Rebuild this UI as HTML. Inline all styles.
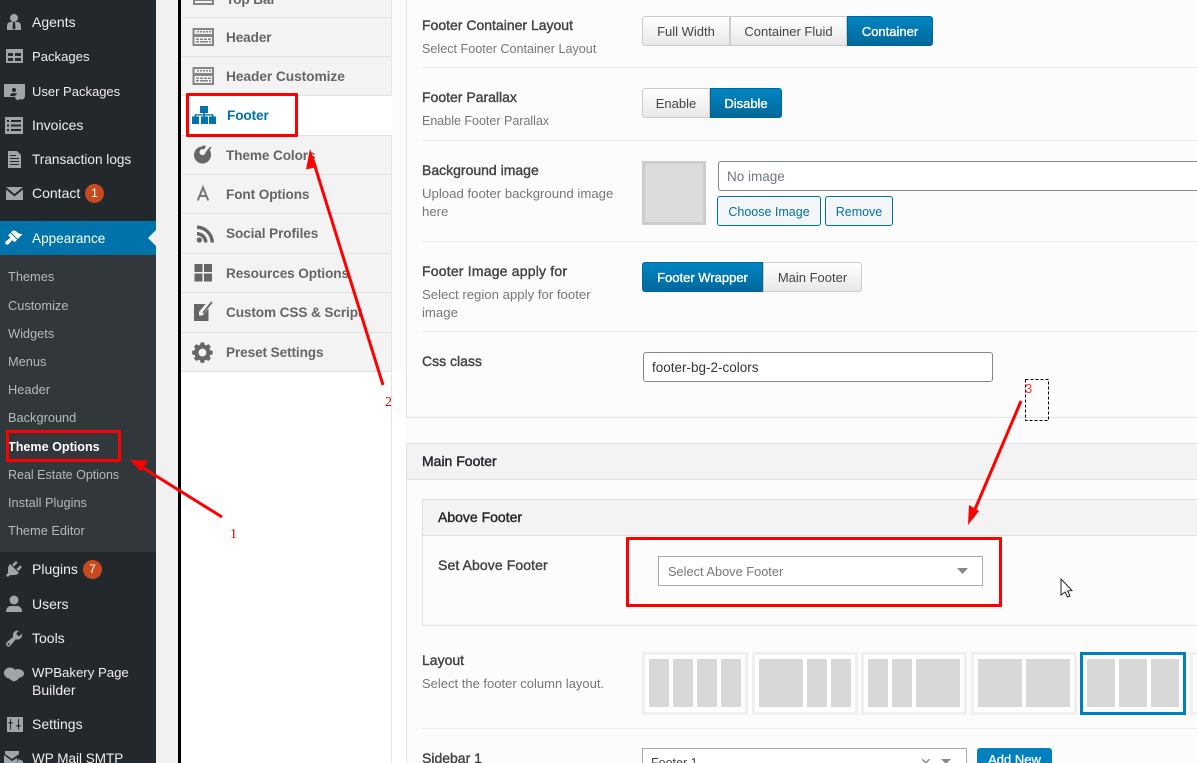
<!DOCTYPE html>
<html><head><meta charset="utf-8"><style>
html,body{margin:0;padding:0;width:1197px;height:763px;overflow:hidden;background:#fcfcfc}
body{position:relative;font-family:"Liberation Sans",sans-serif;font-size:13px;color:#444}
div,span.a,svg{position:absolute}
.t{white-space:nowrap;line-height:20px;height:20px}
.m{left:32px;font-size:14px;color:#eee}
.s{left:8px;font-size:12.8px;color:#b4b9be}
.tab{left:226px;font-size:13.6px;font-weight:bold;color:#666;letter-spacing:-.1px}
.l{left:422px;font-size:14px;color:#444;-webkit-text-stroke:.4px #444}
.d{left:422px;font-size:12.6px;color:#777}
.hr{height:1px;background:#eee;left:422px;width:775px}
.b{height:1px;background:#e2e2e2}
.btn{box-sizing:border-box;height:30px;text-align:center;line-height:30px;font-size:13px;color:#444;background:linear-gradient(#fff,#e8e8e8);border:1px solid #ccc}
.on{background:linear-gradient(#0085c3,#00689b);border:1px solid #006799;color:#fff;-webkit-text-stroke:.35px #fff;line-height:30px}
.inp{box-sizing:border-box;background:#fff;border:1px solid #7e8993;border-radius:3px;height:30px;line-height:30px;font-size:13.5px;padding-left:8px}
.ob{box-sizing:border-box;height:30px;background:#f3f5f6;border:1px solid #0071a1;border-radius:3px;color:#0071a1;text-align:center;line-height:30px;font-size:12.5px}
.th{box-sizing:border-box;top:652px;height:63px;width:106px;border:3px solid #f0f0f0;background:#fff}
.g{top:659px;height:48px;background:#d8d8d8}
.red{box-sizing:border-box;border:3.500px solid #f00;border-radius:1px}
.bd{left:85px;width:19px;height:19px;border-radius:50%;background:#ca4a1f;color:#fff;font-size:12px;line-height:19px;text-align:center}
.h{font-size:14px;color:#23282d;-webkit-text-stroke:.4px #23282d}
</style></head><body>

<!-- Admin sidebar -->
<div style="left:0;top:0;width:156px;height:763px;background:#23282d"></div>
<div style="left:0;top:255px;width:156px;height:297px;background:#32373c"></div>
<div style="left:0;top:221px;width:156px;height:34px;background:#0073aa"></div>
<svg style="left:148px;top:230px" width="8" height="16"><path d="M8 0L0 8l8 8z" fill="#f1f1f1"/></svg>
<div style="left:156px;top:0;width:22px;height:763px;background:#f1f1f1"></div>
<div style="left:178px;top:0;width:3px;height:763px;background:#000"></div>

<div class="t m" style="top:12px">Agents</div>
<div class="t m" style="top:47px;font-size:13.1px">Packages</div>
<div class="t m" style="top:82px;font-size:13px">User Packages</div>
<div class="t m" style="top:115px">Invoices</div>
<div class="t m" style="top:150px;font-size:13.6px">Transaction logs</div>
<div class="t m" style="top:183px">Contact</div>
<div class="bd" style="top:184px">1</div>
<div class="t m" style="top:229px;color:#fff;font-size:13.6px">Appearance</div>
<div class="t s" style="top:267px">Themes</div>
<div class="t s" style="top:296px">Customize</div>
<div class="t s" style="top:324px">Widgets</div>
<div class="t s" style="top:352px">Menus</div>
<div class="t s" style="top:380px">Header</div>
<div class="t s" style="top:408px">Background</div>
<div class="t s" style="top:437px;color:#fff;font-weight:bold;font-size:12.6px">Theme Options</div>
<div class="t s" style="top:465px;font-size:12.5px">Real Estate Options</div>
<div class="t s" style="top:493px">Install Plugins</div>
<div class="t s" style="top:521px">Theme Editor</div>
<div class="t m" style="top:559px">Plugins</div>
<div class="bd" style="top:560px;left:83px">7</div>
<div class="t m" style="top:594px">Users</div>
<div class="t m" style="top:628px">Tools</div>
<div class="t m" style="top:663px;font-size:13.2px">WPBakery Page</div>
<div class="t m" style="top:680px">Builder</div>
<div class="t m" style="top:714px">Settings</div>
<div class="t m" style="top:749px;font-size:13.5px">WP Mail SMTP</div>

<!-- Sidebar icons -->
<svg style="left:0;top:0" width="32" height="763" fill="#a0a5aa">
<circle cx="14" cy="18" r="4"/><path d="M7 30v-4q0-3 3-4h8q3 1 3 4v4z"/><path d="M13 22h2l.6 6-1.6 2-1.6-2z" fill="#23282d"/>
<path fill-rule="evenodd" d="M6 49h17v14H6zM8 53v3h5v-3zM15 53v3h6v-3zM8 58v3h5v-3zM15 58v3h6v-3z"/>
<path d="M4 84h21v13h-7a4 4 0 0 0-4 0H4z"/><circle cx="14" cy="90" r="2" fill="#23282d"/><path d="M10 96q0-3 4-3t4 3z" fill="#23282d"/><circle cx="18" cy="97" r="3"/><circle cx="22" cy="97" r="2.500"/>
<path fill-rule="evenodd" d="M5 117h18v17H5zM7 120v2h2v-2zM11 120v2h10v-2zM7 124.500v2h2v-2zM11 124.500v2h10v-2zM7 129v2h2v-2zM11 129v2h10v-2z"/>
<path fill-rule="evenodd" d="M8 151h9l4 4v13H8zM10 155v1h6v-1zM10 158v1h9v-1zM10 161v1h9v-1zM10 164v1h9v-1z"/>
<path d="M6 187h17l-8.500 7zM6 189.500v10.500h17v-10.500l-8.500 7z"/>
<path transform="translate(4,228.500) scale(.95)" fill="#fff" d="M14.480 11.060L7.410 3.990l1.500-1.500c.5-.56 2.300-.47 3.510.32 1.210.8 1.430 1.280 2.910 2.100 1.180.64 2.450 1.260 4.450.85zm-.71.71L6.700 4.700 4.930 6.470c-.39.39-.39 1.020 0 1.410l1.060 1.060c.39.39.39 1.030 0 1.420-.6.6-1.430 1.110-2.210 1.690-.35.26-.7.53-1.010.84C1.430 13.230 1 14.700 1.800 16.200c1 1.200 2.500 1 3.600-.2.300-.3.600-.7.840-1 .58-.78 1.090-1.600 1.700-2.200.4-.4 1-.4 1.400 0l1.060 1.060c.39.39 1.020.39 1.410 0z"/>
<path transform="translate(4,559)" d="M13.110 4.360L9.870 7.600 8 5.730l3.240-3.240c.35-.34 1.050-.2 1.560.32.520.51.660 1.210.31 1.550zm-8 1.770l.91-1.120 9.010 9.010-1.190.84c-.71.71-2.630 1.160-3.820 1.160H6.140L4.900 17.260c-.59.59-1.540.59-2.120 0-.59-.58-.59-1.530 0-2.120l1.240-1.240v-3.880c0-1.130.4-3.190 1.090-3.890zm7.260 3.970l3.240-3.240c.34-.35 1.040-.21 1.550.31.520.51.660 1.210.31 1.550l-3.240 3.250z"/>
<circle cx="14" cy="600" r="4.500"/><path d="M6 612q0-5 4-6h8q4 1 4 6z"/>
<path transform="translate(4,628.500)" fill-rule="evenodd" d="M16.680 9.770c-1.340 1.340-3.300 1.670-4.950.99l-5.410 6.520c-.99.99-2.590.99-3.580 0s-.99-2.590 0-3.570l6.520-5.420c-.68-1.650-.35-3.610.99-4.950 1.280-1.280 3.120-1.620 4.720-1.060l-2.890 2.890 2.820 2.820 2.860-2.870c.53 1.580.18 3.390-1.080 4.670zM3.810 16.210c.4.39 1.040.39 1.430 0 .4-.4.4-1.040 0-1.430-.39-.4-1.030-.4-1.430 0-.39.39-.39 1.030 0 1.430z"/>
<ellipse cx="10" cy="673" rx="6" ry="5.500"/><ellipse cx="18" cy="673.500" rx="6" ry="4.500"/><ellipse cx="14" cy="677" rx="5" ry="4"/><path d="M12 679l4 0-2 3z"/>
<path fill-rule="evenodd" d="M7 717h16v15H7zM10 719v3h-1.500v1.500H10v6h1v-6h1.500V722H11v-3zM18 719v6h-1.500v1.500H18v3h1v-3h1.500V725H19v-6z"/>
<path d="M5 751h14v3l-7 5-7-5zM4 755l8 6 5-3v5H4zM18 759l5 2v2h-6z"/>
</svg>

<!-- Tabs column -->
<div style="left:181px;top:0;width:210px;height:371px;background:#f3f3f3"></div>
<div style="left:181px;top:371px;width:225px;height:392px;background:#fff"></div>
<div style="left:391px;top:0;width:1px;height:763px;background:#e5e5e5"></div>
<div style="left:181px;top:96px;width:211px;height:39px;background:#fff"></div>
<div class="b" style="left:181px;top:17px;width:210px"></div>
<div class="b" style="left:181px;top:56px;width:210px"></div>
<div class="b" style="left:181px;top:95px;width:210px"></div>
<div class="b" style="left:181px;top:135px;width:210px"></div>
<div class="b" style="left:181px;top:174px;width:210px"></div>
<div class="b" style="left:181px;top:213px;width:210px"></div>
<div class="b" style="left:181px;top:253px;width:210px"></div>
<div class="b" style="left:181px;top:292px;width:210px"></div>
<div class="b" style="left:181px;top:332px;width:210px"></div>
<div class="b" style="left:181px;top:371px;width:210px"></div>

<div class="t tab" style="top:-10px">Top Bar</div>
<div class="t tab" style="top:28px">Header</div>
<div class="t tab" style="top:67px;font-size:13.800px">Header Customize</div>
<div class="t tab" style="top:106px;left:227px;color:#0073aa">Footer</div>
<div class="t tab" style="top:146px">Theme Colors</div>
<div class="t tab" style="top:185px">Font Options</div>
<div class="t tab" style="top:224px">Social Profiles</div>
<div class="t tab" style="top:264px">Resources Options</div>
<div class="t tab" style="top:303px">Custom CSS &amp; Script</div>
<div class="t tab" style="top:343px">Preset Settings</div>

<!-- Tab icons -->
<svg style="left:185px;top:0;overflow:visible" width="36" height="370" fill="#858585">
<path fill-rule="evenodd" d="M8-6h21V5H8zM10-3v1h17v-1zM10 1v2h17V1z"/>
<path fill-rule="evenodd" d="M7.500 28h21.500v18H7.500zM9.500 30v4h17.500v-4zM9.500 37v7h17.500v-7z"/><path d="M12 31h2v1.500h-2zM15 31h2v1.500h-2zM18 31h2v1.500h-2zM21 31h2v1.500h-2zM24 31h2v1.500h-2zM11 38.500h3v1.500h-3zM15 38.500h3v1.500h-3zM19 38.500h3v1.500h-3zM23 38.500h3v1.500h-3zM11 41h3v1.500h-3zM15 41h8v1.500h-8zM24 41h2v1.500h-2z"/>
<path fill-rule="evenodd" d="M7.500 67h21.500v18H7.500zM9.500 69v4h17.500v-4zM9.500 76v7h17.500v-7z"/><path d="M12 70h2v1.500h-2zM15 70h2v1.500h-2zM18 70h2v1.500h-2zM21 70h2v1.500h-2zM24 70h2v1.500h-2zM11 77.500h3v1.500h-3zM15 77.500h3v1.500h-3zM19 77.500h3v1.500h-3zM23 77.500h3v1.500h-3zM11 80h3v1.500h-3zM15 80h8v1.500h-8zM24 80h2v1.500h-2z"/>
<g fill="#0073aa"><path d="M15 106h8v7h-8zM7 116.500h7v7.500H7zM16 116.500h7v7.500h-7zM24 116.500h7v7.500h-7z"/><path d="M18.200 113h1.600v1.200H28.500v2.300h-1.600v-1H19.800v1h-1.600v-1H11.100v1H9.500v-2.300h8.700z"/></g>
<path fill="#666" fill-rule="evenodd" d="M17.500 146.500a8.500 8.500 0 1 0 8.500 8.500c0-2.500-.7-4.500-2-6l-3.500 3a3 3 0 1 1-1.500-2.500l2-3.500c-1-.3-2.300-.5-3.500-.5z"/>
<path fill="#666" d="M25.500 146.500l1 1-3 4-1.500-1.500z"/>
<path fill="none" stroke="#777" stroke-width="2" d="M12.800 200.500L18 187.500l5.200 13M14.600 196h6.800"/>
<path fill="#666" d="M12 225.500c9 0 17 8 17 17h-3.500c0-7.500-6-13.500-13.500-13.500zM12 232c5.800 0 10.500 4.700 10.500 10.500H19c0-3.900-3.100-7-7-7z"/><circle cx="14.300" cy="240" r="2.600" fill="#666"/>
<path fill="#666" d="M9.500 264h8v8h-8zM19 264h8v8h-8zM9.500 273.500h8v8h-8zM19 273.500h8v8h-8z"/>
<path fill="#666" d="M9 304h11.500l-6.500 8v3.500h3.500l6-7V321H9z"/><path fill="none" stroke="#666" stroke-width="1.800" d="M18 313l9-11"/>
<path transform="translate(17.400,352.600) scale(.87) translate(-18.500,-353.800)" fill="#666" fill-rule="evenodd" d="M16.500 342h4l.6 2.800 1.800.8 2.500-1.500 2.800 2.800-1.500 2.500.8 1.800 2.800.6v4l-2.800.6-.8 1.800 1.500 2.500-2.800 2.800-2.500-1.500-1.800.8-.6 2.800h-4l-.6-2.800-1.800-.8-2.500 1.500-2.800-2.800 1.500-2.500-.8-1.800-2.800-.6v-4l2.800-.6.8-1.800-1.500-2.500 2.800-2.800 2.500 1.500 1.800-.8zM18.500 349.300a4.500 4.500 0 1 0 .1 0z"/>
</svg>

<!-- Main panel lines -->
<div style="left:406px;top:0;width:1px;height:418px;background:#e2e2e2"></div>
<div class="b" style="left:406px;top:417px;width:791px"></div>
<div class="hr" style="top:67px"></div>
<div class="hr" style="top:140px"></div>
<div class="hr" style="top:241px"></div>
<div class="hr" style="top:331px"></div>

<div class="t l" style="top:15px">Footer Container Layout</div>
<div class="t d" style="top:39px">Select Footer Container Layout</div>
<div class="btn" style="left:642px;top:16px;width:88px;border-radius:3px 0 0 3px">Full Width</div>
<div class="btn" style="left:730px;top:16px;width:117px">Container Fluid</div>
<div class="btn on" style="left:847px;top:16px;width:86px;border-radius:0 3px 3px 0">Container</div>

<div class="t l" style="top:87px">Footer Parallax</div>
<div class="t d" style="top:111px;font-size:12.5px">Enable Footer Parallax</div>
<div class="btn" style="left:642px;top:88px;width:68px;border-radius:3px 0 0 3px">Enable</div>
<div class="btn on" style="left:710px;top:88px;width:72px;border-radius:0 3px 3px 0">Disable</div>

<div class="t l" style="top:160px">Background image</div>
<div class="t d" style="top:184px;font-size:13.2px">Upload footer background image</div>
<div class="t d" style="top:202px;font-size:13.2px">here</div>
<div style="left:642px;top:161px;width:64px;height:64px;box-sizing:border-box;background:#dcdcdc;border:3px solid #ccc"></div>
<div class="inp" style="left:718px;top:161px;width:490px;color:#72777c">No image</div>
<div class="ob" style="left:717px;top:196px;width:104px">Choose Image</div>
<div class="ob" style="left:825px;top:196px;width:68px">Remove</div>

<div class="t l" style="top:261px;letter-spacing:.2px">Footer Image apply for</div>
<div class="t d" style="top:285px;font-size:13.2px">Select region apply for footer</div>
<div class="t d" style="top:303px;font-size:13.2px">image</div>
<div class="btn on" style="left:642px;top:262px;width:121px;border-radius:3px 0 0 3px">Footer Wrapper</div>
<div class="btn" style="left:763px;top:262px;width:99px;border-radius:0 3px 3px 0">Main Footer</div>

<div class="t l" style="top:351px">Css class</div>
<div class="inp" style="left:643px;top:352px;width:350px;color:#32373c">footer-bg-2-colors</div>

<!-- Main Footer -->
<div style="left:406px;top:443px;width:791px;height:35px;background:#f3f3f3;border:1px solid #e2e2e2;border-right:0"></div>
<div class="t h" style="left:422px;top:451px">Main Footer</div>
<div style="left:406px;top:480px;width:1px;height:283px;background:#e5e5e5"></div>

<div style="left:422px;top:499px;width:775px;height:35px;background:#f3f3f3;border:1px solid #e0e0e0;border-right:0"></div>
<div style="left:422px;top:536px;width:1px;height:90px;background:#e2e2e2"></div>
<div class="b" style="left:422px;top:625px;width:775px"></div>
<div class="t h" style="left:438px;top:507px">Above Footer</div>
<div class="t l" style="left:438px;top:555px;letter-spacing:.1px">Set Above Footer</div>
<div style="left:658px;top:556px;width:325px;height:30px;box-sizing:border-box;background:#fff;border:1px solid #aaa"></div>
<div class="t" style="left:668px;top:562px;font-size:12.8px;color:#777">Select Above Footer</div>
<svg style="left:957px;top:568px" width="12" height="7"><path d="M0 0h11L5.500 6z" fill="#888"/></svg>

<div class="t l" style="top:650px">Layout</div>
<div class="t d" style="top:674px;font-size:13px">Select the footer column layout.</div>

<div class="th" style="left:642px"></div>
<div class="g" style="left:649px;width:20px"></div><div class="g" style="left:673px;width:20px"></div><div class="g" style="left:697px;width:20px"></div><div class="g" style="left:721px;width:20px"></div>
<div class="th" style="left:752px"></div>
<div class="g" style="left:759px;width:44px"></div><div class="g" style="left:807px;width:20px"></div><div class="g" style="left:831px;width:20px"></div>
<div class="th" style="left:861px"></div>
<div class="g" style="left:868px;width:20px"></div><div class="g" style="left:892px;width:20px"></div><div class="g" style="left:916px;width:44px"></div>
<div class="th" style="left:971px"></div>
<div class="g" style="left:978px;width:44px"></div><div class="g" style="left:1026px;width:44px"></div>
<div class="th" style="left:1080px;border-color:#0080bf"></div>
<div class="g" style="left:1087px;width:28px"></div><div class="g" style="left:1119px;width:28px"></div><div class="g" style="left:1151px;width:28px"></div>
<div class="th" style="left:1190px"></div>

<div class="hr" style="top:728px"></div>
<div class="t l" style="top:748px">Sidebar 1</div>
<div style="left:642px;top:748px;width:325px;height:30px;box-sizing:border-box;background:#fff;border:1px solid #aaa"></div>
<div class="t" style="left:651px;top:753px;font-size:12.5px;color:#444">Footer 1</div>
<div class="t" style="left:920px;top:753px;font-size:14px;color:#888">✕</div>
<svg style="left:941px;top:759px" width="12" height="7"><path d="M0 0h10L5 5z" fill="#888"/></svg>
<div style="left:977px;top:748px;width:75px;height:30px;border-radius:3px;background:#0080bf;color:#fff;text-align:center;line-height:24px;font-size:13px;-webkit-text-stroke:.3px #fff">Add New</div>

<!-- Annotations -->
<div class="red" style="left:186px;top:93px;width:112px;height:44px"></div>
<div class="red" style="left:6px;top:430px;width:115px;height:32px"></div>
<div class="red" style="left:626px;top:537px;width:376px;height:70px"></div>
<svg style="left:0;top:0" width="1197" height="763">
<g stroke="#f00" stroke-width="3" fill="#f00">
<path d="M222 517L140 466"/><path d="M130 460l18 .5-7 11z" stroke="none"/>
<path d="M383 385L313 160"/><path d="M310 149l7 18-11 2.500z" stroke="none"/>
<path d="M1021 401L973 514"/><path d="M968 525l1-20 10 6z" stroke="none"/>
</g>
<rect x="1025.500" y="379.500" width="23" height="41" fill="none" stroke="#000" stroke-dasharray="3 2"/>
<path d="M1061 579v16l4-3 2.500 5 2.500-1-2.500-5 4.500-.5z" fill="#fff" stroke="#223" stroke-width="1"/>
</svg>
<div class="t" style="left:230px;top:525px;font-size:14px;color:#e00;font-family:'Liberation Serif',serif">1</div>
<div class="t" style="left:385px;top:393px;font-size:14px;color:#e00;font-family:'Liberation Serif',serif">2</div>
<div class="t" style="left:1025px;top:379px;font-size:13px;color:#f33">3</div>
</body></html>
